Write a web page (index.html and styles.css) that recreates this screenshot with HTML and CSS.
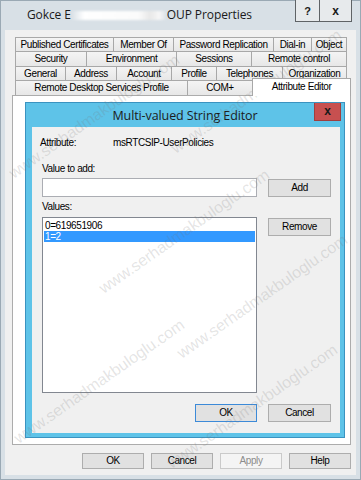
FILE: index.html
```html
<!DOCTYPE html>
<html>
<head>
<meta charset="utf-8">
<link rel="stylesheet" href="styles.css">
</head>
<body>
<div class="window">
  <div class="titlebar">
    <div class="title"><span>Gokce E</span><span class="blur"></span><span>OUP Properties</span></div>
    <div class="caption">
      <div class="cap-btn cap-help">?</div>
      <div class="cap-btn cap-close">x</div>
    </div>
  </div>
  <div class="client">
    <div class="tabs">
      <div class="row r1">
        <div class="tab">Published Certificates</div>
        <div class="tab">Member Of</div>
        <div class="tab">Password Replication</div>
        <div class="tab">Dial-in</div>
        <div class="tab">Object</div>
      </div>
      <div class="row r2">
        <div class="tab">Security</div>
        <div class="tab">Environment</div>
        <div class="tab">Sessions</div>
        <div class="tab">Remote control</div>
      </div>
      <div class="row r3">
        <div class="tab">General</div>
        <div class="tab">Address</div>
        <div class="tab">Account</div>
        <div class="tab">Profile</div>
        <div class="tab">Telephones</div>
        <div class="tab">Organization</div>
      </div>
      <div class="row r4">
        <div class="tab">Remote Desktop Services Profile</div>
        <div class="tab">COM+</div>
        <div class="tab sel">Attribute Editor</div>
      </div>
    </div>
    <div class="panel">
      <div class="dialog">
        <div class="dlg-title">
          <span>Multi-valued String Editor</span>
          <div class="dlg-close">x</div>
        </div>
        <div class="dlg-body">
          <div class="attr"><span class="attr-label">Attribute:</span><span>msRTCSIP-UserPolicies</span></div>
          <div class="lbl">Value to add:</div>
          <div class="input"></div>
          <div class="btn add">Add</div>
          <div class="lbl values">Values:</div>
          <div class="list">
            <div class="item">0=619651906</div>
            <div class="item sel">1=2</div>
          </div>
          <div class="btn remove">Remove</div>
          <div class="footer">
            <div class="btn default ok">OK</div>
            <div class="btn cancel">Cancel</div>
          </div>
        </div>
      </div>
    </div>
    <div class="buttons">
      <div class="btn">OK</div>
      <div class="btn">Cancel</div>
      <div class="btn disabled">Apply</div>
      <div class="btn">Help</div>
    </div>
  </div>
  <div class="wm">
    <span class="w1">www.serhadmakbuloglu.com</span>
    <span class="w2">www.serhadmakbuloglu.com</span>
    <span class="w3">www.serhadmakbuloglu.com</span>
    <span class="w4">www.serhadmakbuloglu.com</span>
    <span class="w5">www.serhadmakbuloglu.com</span>
    <span class="w6">www.serhadmakbuloglu.com</span>
  </div>
</div>
</body>
</html>
```
FILE: styles.css
```css
* { box-sizing: border-box; }
html, body { margin: 0; padding: 0; }
body {
  width: 361px;
  height: 480px;
  overflow: hidden;
  font-family: "Liberation Sans", Arial, sans-serif;
  font-size: 10px;
  letter-spacing: -0.4px;
  color: #000;
  background: #d8e0e6;
}
.window {
  position: relative;
  width: 361px;
  height: 480px;
  background: #d8e0e6;
  border: 1px solid #9aa9b4;
  display: flex;
  flex-direction: column;
}
.titlebar {
  height: 29px;
  flex: none;
  display: flex;
  align-items: flex-start;
  padding-left: 26px;
}
.title {
  height: 27px;
  display: flex;
  align-items: center;
  font-family: "Open Sans", sans-serif;
  font-size: 12px;
  letter-spacing: -0.1px;
  color: #1a1a1a;
  white-space: nowrap;
}
.blur {
  flex: none;
  width: 96px;
  height: 9px;
  margin-top: 1px;
  background: linear-gradient(to right, rgba(255,255,255,0), #fff 14%, #fbfbfb 70%, #e8e8e8 82%, #f6f6f6 92%, rgba(255,255,255,0));
  filter: blur(1.2px);
}
.caption {
  margin-left: auto;
  margin-right: 8px;
  margin-top: -1px;
  display: flex;
}
.cap-btn {
  height: 22px;
  border: 1px solid #5f6366;
  border-top: none;
  background: #e7eaec;
  display: flex;
  align-items: center;
  justify-content: center;
  font-weight: bold;
  font-size: 11px;
  letter-spacing: 0;
  color: #1a1a1a;
}
.cap-help { width: 25px; }
.cap-close { width: 32px; border-left: none; font-size: 12px; }

.client {
  flex: 1;
  margin: 0 4px 4px 4px;
  background: #f0f0f0;
  padding: 7px 5px 6px 7px;
  display: flex;
  flex-direction: column;
}
.tabs { padding: 0 4px 0 3px; flex: none; }
.row { display: grid; }
.r1 { grid-template-columns: 98px 60px 100px 38px 1fr; height: 14px; }
.r2 { grid-template-columns: 71px 90px 75px 1fr; height: 15px; }
.r3 { grid-template-columns: 50px 51px 55px 45px 66px 1fr; height: 14px; }
.r4 { grid-template-columns: 172px 65px 1fr; height: 15px; }
.tab {
  border-top: 1px solid #a8a8a8;
  border-left: 1px solid #a8a8a8;
  background: linear-gradient(#f4f4f4, #e7e7e7);
  display: flex;
  align-items: center;
  justify-content: center;
  white-space: nowrap;
  line-height: 12px;
}
.tab:last-child { border-right: 1px solid #a8a8a8; }
.tab.sel {
  background: #fff;
  margin: -2px -4px -1px 0;
  padding-bottom: 2px;
  position: relative;
  z-index: 1;
}
.panel {
  flex: 1;
  background: #fff;
  border: 1px solid #acacac;
  padding: 6px 5px 6px 12px;
  display: flex;
}
.dialog {
  flex: 1;
  border: 1px solid #3b93c0;
  background: #5ec3e8;
  display: flex;
  flex-direction: column;
}
.dlg-title {
  height: 24px;
  flex: none;
  position: relative;
  display: flex;
  align-items: center;
  justify-content: center;
  font-family: "Open Sans", sans-serif;
  font-size: 12.5px;
  letter-spacing: -0.1px;
  color: #1c1c1c;
}
.dlg-close {
  position: absolute;
  right: 3px;
  top: 0;
  width: 27px;
  height: 18px;
  background: #c75050;
  border: 1px solid #a03f3f;
  border-top: none;
  display: flex;
  align-items: center;
  justify-content: center;
  font-family: "Liberation Sans", Arial, sans-serif;
  font-weight: bold;
  font-size: 12px;
  color: #1a1a1a;
  line-height: 12px;
  padding-bottom: 2px;
}
.dlg-body {
  flex: 1;
  margin: 0 4px 4px 6px;
  background: #f0f0f0;
  padding: 10px 9px 0 10px;
  display: grid;
  grid-template-columns: 215px 63px;
  column-gap: 11px;
  align-content: start;
}
.attr {
  grid-column: 1 / -1;
  display: flex;
  height: 12px;
  line-height: 12px;
  margin-left: -2px;
}
.attr-label { width: 73px; }
.lbl {
  grid-column: 1 / -1;
  height: 12px;
  line-height: 12px;
  margin-top: 14px;
}
.lbl.values { margin-top: 4px; }
.input {
  height: 19px;
  margin-top: 3px;
  background: #fff;
  border: 1px solid #abadb3;
}
.btn {
  background: #e1e1e1;
  border: 1px solid #adadad;
  display: flex;
  align-items: center;
  justify-content: center;
  line-height: 12px;
}
.btn.add { margin-top: 4px; height: 18px; align-self: start; }
.list {
  margin-top: 4px;
  height: 176px;
  background: #fff;
  border: 1px solid #828790;
  padding: 2px 1px;
}
.item { height: 11px; line-height: 11px; padding-left: 1px; white-space: nowrap; }
.item.sel { background: #3399ff; color: #fff; }
.btn.remove { margin-top: 5px; height: 18px; align-self: start; }
.footer {
  grid-column: 1 / -1;
  display: flex;
  justify-content: flex-end;
  gap: 11px;
  margin-top: 11px;
}
.footer .btn { height: 18px; }
.btn.ok { width: 62px; }
.btn.cancel { width: 63px; }
.btn.default { border-color: #3c8ad8; }
.buttons {
  flex: none;
  display: flex;
  justify-content: flex-end;
  gap: 7px;
  margin-top: 8px;
  height: 16px;
}
.buttons .btn { width: 62px; }
.btn.disabled { background: #f4f4f4; border-color: #cacaca; color: #8c8c8c; }

.wm {
  position: absolute;
  left: 0;
  top: 0;
  width: 361px;
  height: 480px;
  overflow: hidden;
  pointer-events: none;
}
.wm span {
  position: absolute;
  transform: rotate(-35deg);
  transform-origin: 0 50%;
  font-family: "Liberation Sans", Arial, sans-serif;
  font-size: 16px;
  letter-spacing: 0;
  white-space: nowrap;
  color: rgba(120, 120, 120, 0.2);
}
.w1 { left: 10px; top: 165px; }
.w2 { left: 100px; top: 280px; }
.w3 { left: 178px; top: 345px; }
.w4 { left: 15px; top: 430px; }
.w5 { left: 168px; top: 455px; }
.w6 { left: 172px; top: 140px; }
```
